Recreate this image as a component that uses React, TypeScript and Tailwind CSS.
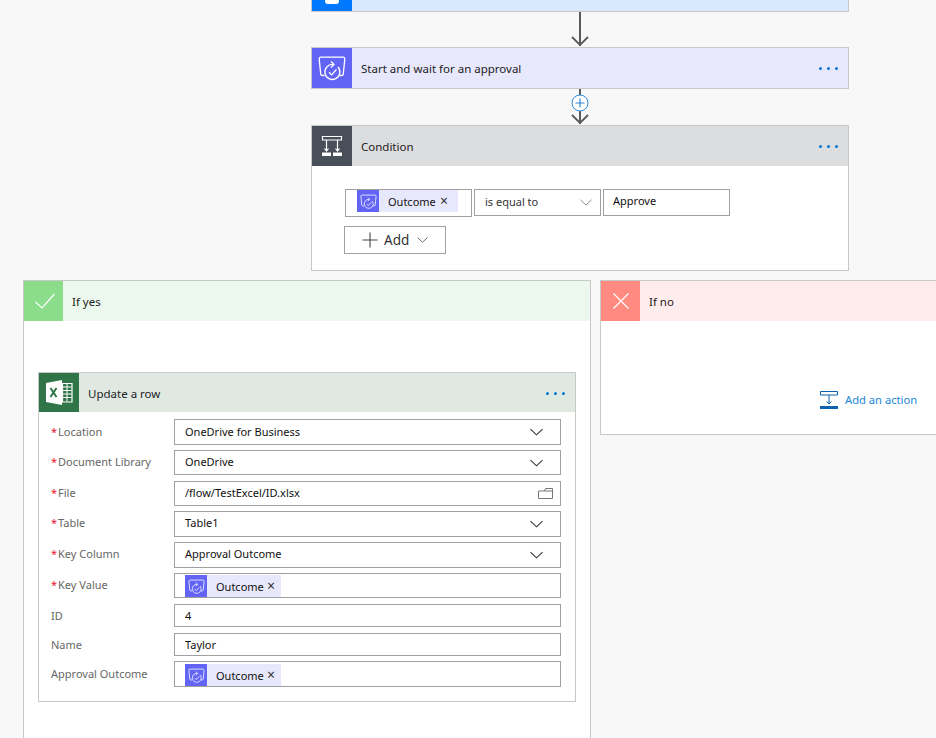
import { ReactNode } from 'react'

const font = "font-['Noto_Sans','Liberation_Sans',sans-serif]"

function ApprovalIcon({ className }: { className: string }) {
  return (
    <svg viewBox="0 0 32 32" className={className} fill="none" stroke="white" strokeWidth="1.300">
      <path d="M8.500 23.500h-2c-1 0-1.700-.7-1.800-1.600L3.200 7c0-1 .7-1.800 1.700-1.800h22.200c1 0 1.700.8 1.700 1.800l-1.500 14.900c-.1.9-.8 1.600-1.800 1.600h-2" />
      <path d="M17 12.500A7.500 7.500 0 1 0 22 15" />
      <path d="M15 9.500l3 3-3 3" />
      <path d="M13 20.300l2.600 2.600 4.800-5.400" />
    </svg>
  )
}

function ConditionIcon() {
  return (
    <svg viewBox="0 0 40 40" className="w-10 h-10" fill="none" stroke="white" strokeWidth="1.200">
      <path d="M10.500 10.500h19v3.500h-19z" />
      <path d="M14.500 14v11M25.500 14v11M12.500 22.500l2 2.500 2-2.500M23.500 22.500l2 2.500 2-2.500" />
      <path d="M10 26.500h9v3.500h-9zM21 26.500h9v3.500h-9z" fill="white" stroke="none" />
    </svg>
  )
}

function ExcelIcon() {
  return (
    <svg viewBox="0 0 40 40" className="w-10 h-10">
      <path d="M7 10L23 7v25L7 29z" fill="white" />
      <path d="M23.500 10.500h9.500v18.500h-9.500z" fill="none" stroke="white" strokeWidth="1.200" />
      <path d="M23.500 14h9M23.500 17.500h9M23.500 21h9M23.500 24.500h9M28 10.500v18" stroke="white" strokeWidth="1" />
      <path d="M11.500 15l6 9M17.500 15l-6 9" stroke="#2f7548" strokeWidth="2" fill="none" />
    </svg>
  )
}

function Dots() {
  return (
    <div className="flex gap-[5px] mr-[10px] mt-px">
      <span className="w-[3px] h-[3px] rounded-full bg-[#0078d4]" />
      <span className="w-[3px] h-[3px] rounded-full bg-[#0078d4]" />
      <span className="w-[3px] h-[3px] rounded-full bg-[#0078d4]" />
    </div>
  )
}

function Chevron({ className }: { className: string }) {
  return (
    <svg viewBox="0 0 14 8" className={className} fill="none" stroke="currentColor" strokeWidth="1.100">
      <path d="M.5 .8L7 7l6.500-6.200" />
    </svg>
  )
}

function Chip({ wide }: { wide?: boolean }) {
  return (
    <div className={`flex items-center shrink-0 h-[22px] bg-[#e8e8fd] ${wide ? 'w-[101px]' : 'w-[96px]'}`}>
      <div className="flex items-center justify-center shrink-0 w-[22px] h-[22px] bg-[#6264f5]">
        <ApprovalIcon className="w-[19px] h-[19px]" />
      </div>
      <span className="ml-[9px] w-[47px] text-[11px] leading-none text-[#111]">Outcome</span>
      <span className={`text-[14px] leading-none text-[#333] ${wide ? 'ml-[5px]' : 'ml-[4px]'}`}>×</span>
    </div>
  )
}

function Arrow({ height, plus }: { height: number; plus?: boolean }) {
  return (
    <div className="flex justify-center">
      <svg width="20" height={height} viewBox={`0 0 20 ${height}`} fill="none">
        <path d={`M10 0V${height - 1}`} stroke="#5a5a5a" strokeWidth="2" />
        <path d={`M2 ${height - 10}l8 8 8-8`} stroke="#5a5a5a" strokeWidth="1.800" />
        {plus && (
          <>
            <circle cx="10" cy="14" r="8" fill="white" stroke="#2b88d8" strokeWidth="1" />
            <path d="M10 9.500v9M5.500 14h9" stroke="#2b88d8" strokeWidth="1.200" />
          </>
        )}
      </svg>
    </div>
  )
}

function Header({ icon, iconBg, iconW, bg, title, h, dots }: { icon?: ReactNode; iconBg: string; iconW: string; bg: string; title: string; h: string; dots?: boolean }) {
  return (
    <div className={`flex items-center ${h} ${bg}`}>
      <div className={`flex items-center justify-center shrink-0 self-stretch ${iconW} ${iconBg}`}>{icon}</div>
      <span className="flex-1 ml-[9px] pt-[2px] text-[11.500px] text-[#222]">{title}</span>
      {dots && <Dots />}
    </div>
  )
}

const rows = [
  { label: 'Location', req: true, value: 'OneDrive for Business', kind: 'select', box: 'h-[26px] mb-[5px]', nudge: '' },
  { label: 'Document Library', req: true, value: 'OneDrive', kind: 'select', box: 'h-[25px] mb-[6px]', nudge: '' },
  { label: 'File', req: true, value: '/flow/TestExcel/ID.xlsx', kind: 'file', box: 'h-[25px] mb-[5px]', nudge: '' },
  { label: 'Table', req: true, value: 'Table1', kind: 'select', box: 'h-[26px] mb-[5px]', nudge: 'pb-[2px]' },
  { label: 'Key Column', req: true, value: 'Approval Outcome', kind: 'select', box: 'h-[26px] mb-[5px]', nudge: 'pb-[2px]' },
  { label: 'Key Value', req: true, value: '', kind: 'chip', box: 'h-[25px] mb-[6px]', nudge: '' },
  { label: 'ID', req: false, value: '4', kind: 'text', box: 'h-[23px] mb-[6px]', nudge: 'pt-[2px]' },
  { label: 'Name', req: false, value: 'Taylor', kind: 'text', box: 'h-[23px] mb-[5px]', nudge: 'pt-[2px]' },
  { label: 'Approval Outcome', req: false, value: '', kind: 'chip', box: 'h-[26px]', nudge: '' },
]

export default function App() {
  return (
    <div className={`w-[936px] h-[738px] overflow-hidden bg-[#f8f8f8] ${font}`}>
      <div className="ml-[311px] w-[538px]">
        <div className="flex h-[12px] border-b border-x border-[#c8c8c8] bg-[#d9e9fd]">
          <div className="flex justify-center w-10 bg-[#0078ff]">
            <div className="w-[14px] h-[4px] bg-white rounded-b-[3px]" />
          </div>
        </div>
        <Arrow height={35} />
        <div className="border border-[#c8c8c8]">
          <Header icon={<ApprovalIcon className="w-8 h-8" />} iconBg="bg-[#6264f5]" iconW="w-10" bg="bg-[#e8e8fd]" title="Start and wait for an approval" h="h-10" dots />
        </div>
        <Arrow height={36} plus />
        <div className="h-[146px] border border-[#c8c8c8] bg-white">
          <Header icon={<ConditionIcon />} iconBg="bg-[#484f58]" iconW="w-10" bg="bg-[#dcddde]" title="Condition" h="h-10" dots />
          <div className="pl-[33px] pt-[23px]">
            <div className="flex gap-[2px] items-start text-[11px] text-[#111]">
              <div className="flex pl-[11px] w-[127px] h-[28px] border border-[#a0a0a0]">
                <Chip wide />
              </div>
              <div className="flex items-center justify-between pl-[10px] pr-[8px] w-[127px] h-[27px] border border-[#a0a0a0] text-[#333]">
                <span>is equal to</span>
                <Chevron className="w-[12px] h-[7px] text-[#888]" />
              </div>
              <div className="flex items-center pl-[9px] pb-[2px] w-[127px] h-[27px] border border-[#a0a0a0]">Approve</div>
            </div>
            <div className="flex items-center mt-[9px] -ml-px pl-[17px] w-[102px] h-[28px] border border-[#a0a0a0]">
              <svg width="16" height="16" viewBox="0 0 16 16" fill="none" stroke="#444" strokeWidth="1.100">
                <path d="M8 .5v15M.5 8h15" />
              </svg>
              <span className="ml-[6px] text-[13.500px] text-[#333]">Add</span>
              <Chevron className="ml-[8px] w-[11px] h-[6px] text-[#444]" />
            </div>
          </div>
        </div>
      </div>

      <div className="flex gap-[9px] ml-[23px] mt-[9px] items-start">
        <div className="shrink-0 w-[568px] h-[500px] border border-[#c8c8c8] bg-white">
          <Header
            icon={
              <svg width="24" height="24" viewBox="0 0 24 24" fill="none" stroke="white" strokeWidth="1.200">
                <path d="M3.500 13l6.500 6L22.500 5" />
              </svg>
            }
            iconBg="bg-[#8bdc8b]"
            iconW="w-[39px]"
            bg="bg-[#ecf7ee]"
            title="If yes"
            h="h-10"
          />
          <div className="ml-[14px] mt-[51px] w-[538px] h-[330px] border border-[#c8c8c8]">
            <Header icon={<ExcelIcon />} iconBg="bg-[#2f7548]" iconW="w-10" bg="bg-[#e0e8e2]" title="Update a row" h="h-[39px]" dots />
            <div className="pl-[12px] pt-[7px]">
              {rows.map((r) => (
                <div key={r.label} className={`flex items-center ${r.box}`}>
                  <div className={`w-[123px] text-[11px] text-[#666] ${r.nudge}`}>
                    {r.req && <span className="text-[#e8112d] mr-px">*</span>}
                    {r.label}
                  </div>
                  <div className={`flex justify-between w-[387px] h-full pl-[10px] pr-[17px] border border-[#a0a0a0] text-[11px] text-[#111] ${r.kind === 'chip' ? 'items-end' : 'items-center'}`}>
                    {r.kind === 'chip' ? <Chip /> : <span className={r.nudge}>{r.value}</span>}
                    {r.kind === 'select' && <Chevron className="w-[13px] h-[8px] text-[#333]" />}
                    {r.kind === 'file' && (
                      <svg width="15" height="11" viewBox="0 0 15 11" fill="none" stroke="#777" className="-mr-[10px]">
                        <path d="M.5 3h14v7.500H.5zM6.500 3l1-2.500h7V3" />
                      </svg>
                    )}
                  </div>
                </div>
              ))}
            </div>
          </div>
        </div>

        <div className="shrink-0 w-[400px] h-[155px] border border-[#c8c8c8] bg-white">
          <Header
            icon={
              <svg width="20" height="20" viewBox="0 0 20 20" fill="none" stroke="white" strokeWidth="1.200">
                <path d="M2.500 2.500l15 15M17.500 2.500l-15 15" />
              </svg>
            }
            iconBg="bg-[#ff8a80]"
            iconW="w-[39px]"
            bg="bg-[#ffeded]"
            title="If no"
            h="h-10"
          />
          <div className="flex items-center ml-[219px] mt-[70px]">
            <svg width="18" height="18" viewBox="0 0 18 18" fill="none" stroke="#0f62ad" strokeWidth="1">
              <path d="M.5 .5h17v3.500H.5zM9 4v9M6.500 10.500L9 13l2.500-2.500" />
              <path d="M0 15h18v3H0z" fill="#0f62ad" stroke="none" />
            </svg>
            <span className="ml-[7px] text-[11.200px] text-[#1a86d9]">Add an action</span>
          </div>
        </div>
      </div>
    </div>
  )
}
